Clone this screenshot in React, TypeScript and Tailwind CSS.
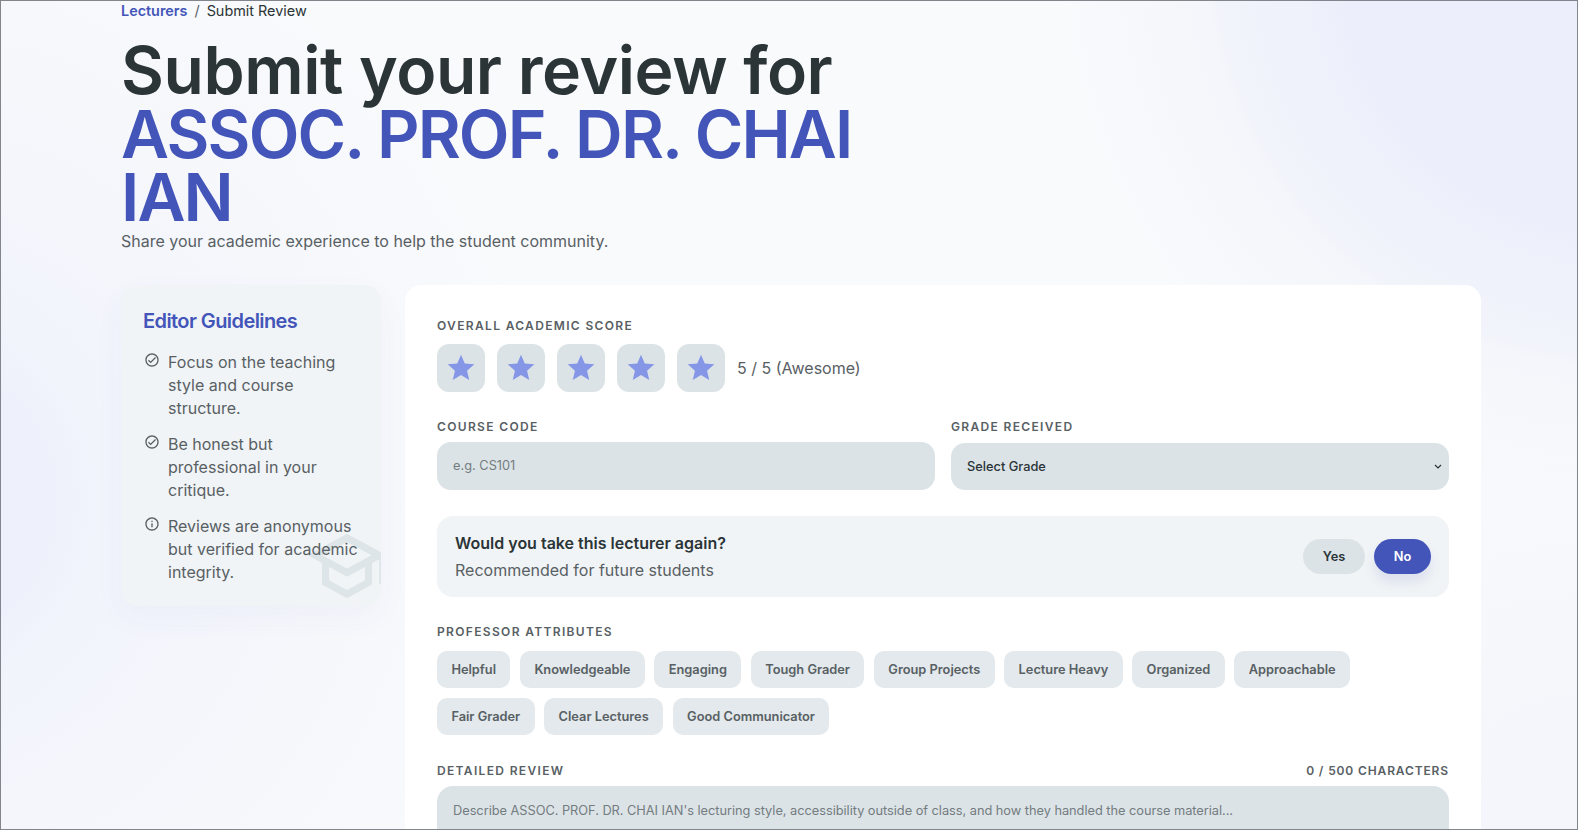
const attributes = [
  "Helpful",
  "Knowledgeable",
  "Engaging",
  "Tough Grader",
  "Group Projects",
  "Lecture Heavy",
  "Organized",
  "Approachable",
  "Fair Grader",
  "Clear Lectures",
  "Good Communicator",
]

const checkPath =
  "M16.59 7.58 10 14.17l-2.59-2.58L6 13l4 4 8-8zM12 2C6.48 2 2 6.48 2 12s4.48 10 10 10 10-4.48 10-10S17.52 2 12 2zm0 18c-4.42 0-8-3.58-8-8s3.58-8 8-8 8 3.58 8 8-3.58 8-8 8z"
const infoPath =
  "M11 7h2v2h-2zm0 4h2v6h-2zm1-9C6.48 2 2 6.48 2 12s4.48 10 10 10 10-4.48 10-10S17.52 2 12 2zm0 18c-4.42 0-8-3.58-8-8s3.58-8 8-8 8 3.58 8 8-3.58 8-8 8z"

const guidelines = [
  { text: "Focus on the teaching style and course structure.", icon: checkPath },
  { text: "Be honest but professional in your critique.", icon: checkPath },
  { text: "Reviews are anonymous but verified for academic integrity.", icon: infoPath },
]

function Label({ children }: { children: React.ReactNode }) {
  return <label className="block text-xs leading-4 font-semibold tracking-[1.34px] uppercase text-[#586064]">{children}</label>
}

function Star() {
  return (
    <button className="flex h-12 w-12 items-center justify-center rounded-xl bg-[#dce3e7]">
      <svg viewBox="0 0 24 24" className="h-8 w-8 fill-[#8596e6]">
        <path d="M12 17.27 18.18 21l-1.64-7.03L22 9.24l-7.19-.61L12 2 9.19 8.63 2 9.24l5.46 4.73L5.82 21z" />
      </svg>
    </button>
  )
}

export default function App() {
  return (
    <div className="relative h-[830px] overflow-hidden border border-[#80868b] bg-[#f9fafc] font-['Inter',sans-serif] text-[#2b3437]">
      <div className="absolute inset-0 bg-[radial-gradient(circle_at_1620px_-50px,#eceffb_280px,#eff1fb_325px,#f2f4fb_405px,#f4f6fb_418px,#f9fafc00_560px),radial-gradient(circle_at_1578px_830px,#f5f6fb_100px,#f9fafc00_420px),radial-gradient(circle_at_-100px_500px,#eef1fb_150px,#f1f4fb_195px,#f9fafc00_640px)]" />

      <div className="relative ml-[120px] w-[1360px]">
        <nav className="flex h-5 items-center gap-[7px] text-[14.4px]">
          <span className="font-semibold text-[#4355b9]">Lecturers</span>
          <span className="text-[#586064]">/</span>
          <span className="text-[#2b3437]">Submit Review</span>
        </nav>

        <h1 className="mt-[18px] w-[800px] text-[66px] leading-[63.5px] font-semibold tracking-[-0.45px]">
          Submit your review for
          <span className="block tracking-[-1.85px] text-[#4355b9]">ASSOC. PROF. DR. CHAI IAN</span>
        </h1>
        <p className="-mt-[1px] text-base leading-6 text-[#586064]">Share your academic experience to help the student community.</p>

        <div className="mt-[32px] flex items-start gap-6">
          <aside className="relative w-[260px] shrink-0 overflow-hidden rounded-2xl bg-[#f1f4f6] px-[23px] pt-[22px] pb-[22px] shadow-[0_12px_32px_rgba(67,85,185,0.04)]">
            <svg viewBox="0 0 24 24" className="absolute -right-[9px] -bottom-[3px] h-[86px] w-[86px] fill-[#dee5e8]">
              <path d="M12 3 1 9l4 2.18v6L12 21l7-3.82v-6l2-1.09V17h2V9L12 3zm6.82 6L12 12.72 5.18 9 12 5.28 18.82 9zM17 15.99l-5 2.73-5-2.73v-3.72L12 15l5-2.73v3.72z" />
            </svg>
            <h2 className="relative -ml-[1px] text-xl leading-7 font-semibold tracking-[-0.58px] text-[#4355b9]">Editor Guidelines</h2>
            <ul className="relative mt-[16px] flex flex-col gap-[12.5px]">
              {guidelines.map((g) => (
                <li key={g.text} className="flex gap-2 text-base leading-[23.2px] text-[#586064]">
                  <svg viewBox="0 0 24 24" className="mt-[1px] h-4 w-4 shrink-0 fill-[#586064]">
                    <path d={g.icon} />
                  </svg>
                  <span>{g.text}</span>
                </li>
              ))}
            </ul>
          </aside>

          <main className="flex-1 rounded-2xl bg-white px-8 pt-[33px] pb-8">
            <Label>Overall Academic Score</Label>
            <div className="mt-[10px] flex items-center gap-3">
              <Star />
              <Star />
              <Star />
              <Star />
              <Star />
              <span className="text-base text-[#586064]">5 / 5 (Awesome)</span>
            </div>

            <div className="mt-[27px] grid grid-cols-2 gap-4">
              <div>
                <Label>Course Code</Label>
                <input
                  placeholder="e.g. CS101"
                  className="mt-[7px] h-12 w-full rounded-[14px] bg-[#dce3e7] px-4 text-[12.8px] placeholder:text-[#737c7f] outline-none"
                />
              </div>
              <div>
                <Label>Grade Received</Label>
                <div className="relative mt-[8px]">
                  <select className="h-[47px] w-full appearance-none rounded-[14px] bg-[#dce3e7] px-4 pt-[1px] text-[12.8px] font-medium text-[#2b3437] outline-none">
                    <option>Select Grade</option>
                  </select>
                  <svg viewBox="0 0 8 5" className="absolute right-[7px] top-[21px] h-[5px] w-2 fill-none stroke-[#2b3437] stroke-[1.2]">
                    <path d="M1 1l3 3 3-3" />
                  </svg>
                </div>
              </div>
            </div>

            <div className="mt-[26px] flex h-[81px] items-center justify-between rounded-2xl bg-[#f1f4f6] px-[18px]">
              <div className="pt-[2px]">
                <p className="text-base leading-[27px] font-semibold">Would you take this lecturer again?</p>
                <p className="text-base leading-[27px] text-[#586064]">Recommended for future students</p>
              </div>
              <div className="flex gap-[9px]">
                <button className="h-[35px] w-[62px] rounded-full bg-[#dce3e7] pt-[1px] text-[12.8px] font-semibold">Yes</button>
                <button className="h-[35px] w-[57px] rounded-full bg-[#4355b9] pt-[1px] text-[12.8px] font-semibold text-white shadow-[0_8px_12px_rgba(67,85,185,0.12)]">No</button>
              </div>
            </div>

            <div className="mt-[27px]">
              <Label>Professor Attributes</Label>
              <div className="mt-[11px] flex flex-wrap gap-[9.6px]">
                {attributes.map((a) => (
                  <button key={a} className="h-[37.6px] rounded-[10px] bg-[#e3e9ec] px-[14.4px] text-[12.8px] font-semibold text-[#586064]">
                    {a}
                  </button>
                ))}
              </div>
            </div>

            <div className="mt-[28px] flex justify-between">
              <Label>Detailed Review</Label>
              <span className="text-xs leading-4 font-semibold tracking-[0.87px] text-[#586064]">0 / 500 CHARACTERS</span>
            </div>
            <textarea
              rows={5}
              placeholder="Describe ASSOC. PROF. DR. CHAI IAN's lecturing style, accessibility outside of class, and how they handled the course material..."
              className="mt-[7px] block w-full resize-none rounded-2xl bg-[#dce3e7] px-4 py-[15px] text-[12.8px] tracking-[-0.03px] placeholder:text-[#737c7f] outline-none"
            />
          </main>
        </div>
      </div>
    </div>
  )
}
